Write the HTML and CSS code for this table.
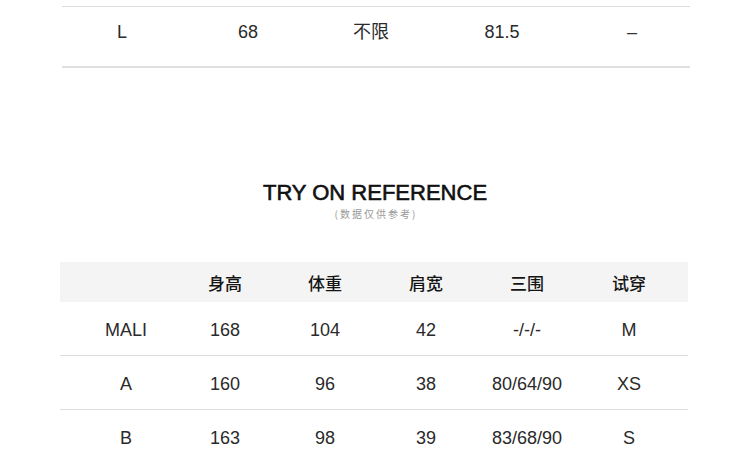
FILE: index.html
```html
<!DOCTYPE html>
<html lang="zh">
<head>
<meta charset="utf-8">
<title>Try On Reference</title>
<link rel="stylesheet" href="styles.css">
</head>
<body>
<div class="page">
  <div class="size-table">
    <div class="size-row">
      <span>L</span>
      <span>68</span>
      <span>不限</span>
      <span>81.5</span>
      <span class="dash">–</span>
    </div>
  </div>

  <div class="heading">
    <h2 class="title">TRY ON REFERENCE</h2>
    <p class="subtitle">(数据仅供参考)</p>
  </div>

  <div class="try-table">
    <div class="try-row try-head">
      <span></span>
      <span>身高</span>
      <span>体重</span>
      <span>肩宽</span>
      <span>三围</span>
      <span>试穿</span>
    </div>
    <div class="try-row">
      <span>MALI</span>
      <span>168</span>
      <span>104</span>
      <span>42</span>
      <span>-/-/-</span>
      <span>M</span>
    </div>
    <div class="try-row">
      <span>A</span>
      <span>160</span>
      <span>96</span>
      <span>38</span>
      <span>80/64/90</span>
      <span>XS</span>
    </div>
    <div class="try-row">
      <span>B</span>
      <span>163</span>
      <span>98</span>
      <span>39</span>
      <span>83/68/90</span>
      <span>S</span>
    </div>
  </div>
</div>
</body>
</html>
```

FILE: styles.css
```css
* {
  box-sizing: border-box;
}

html, body {
  margin: 0;
  padding: 0;
  background: #ffffff;
}

body {
  font-family: "Liberation Sans", Arial, "Noto Sans CJK SC", sans-serif;
  color: #2a2a2a;
  width: 750px;
  height: 457px;
  overflow: hidden;
}

.page {
  padding-top: 6px;
  display: flex;
  flex-direction: column;
}

/* top size table (continuation) */
.size-table {
  margin-left: 62px;
  width: 628px;
  border-top: 1px solid #dcdcdc;
  border-bottom: 2px solid #e0e0e0;
}

.size-row {
  display: grid;
  grid-template-columns: 120px 132px 114px 148px 114px;
  padding: 15px 0 24px;
  font-size: 18px;
  line-height: 20px;
  text-align: center;
}

.size-row span {
  font-family: "Liberation Sans", "Noto Sans CJK SC", sans-serif;
}

.dash {
  color: #333;
  padding-right: 2px;
}

/* heading */
.heading {
  margin-top: 112px;
  display: flex;
  flex-direction: column;
  align-items: center;
}

.title {
  margin: 0;
  font-size: 22px;
  line-height: 26px;
  font-weight: 400;
  color: #111;
  letter-spacing: 0;
  -webkit-text-stroke: 0.6px #111;
}

.subtitle {
  margin: 1px 0 0;
  font-family: "Noto Sans CJK SC", sans-serif;
  font-size: 10px;
  line-height: 14px;
  letter-spacing: 2px;
  color: #9a9a9a;
  padding-left: 2px;
}

/* try-on table */
.try-table {
  margin-top: 41px;
  margin-left: 60px;
  width: 628px;
  display: flex;
  flex-direction: column;
}

.try-row {
  display: grid;
  grid-template-columns: 100px 98px 102px 100px 102px 102px;
  padding: 3px 8px 0 16px;
  height: 54px;
  align-items: center;
  text-align: center;
  font-size: 18px;
  border-bottom: 1px solid #dcdcdc;
}

.try-row:last-child {
  border-bottom: none;
}

.try-head {
  height: 40px;
  padding-top: 0;
  background: #f4f4f4;
  border-bottom: none;
  font-family: "Noto Sans CJK SC", sans-serif;
  font-size: 17px;
  font-weight: 500;
  color: #151515;
}

.try-row span {
  white-space: nowrap;
}
```
